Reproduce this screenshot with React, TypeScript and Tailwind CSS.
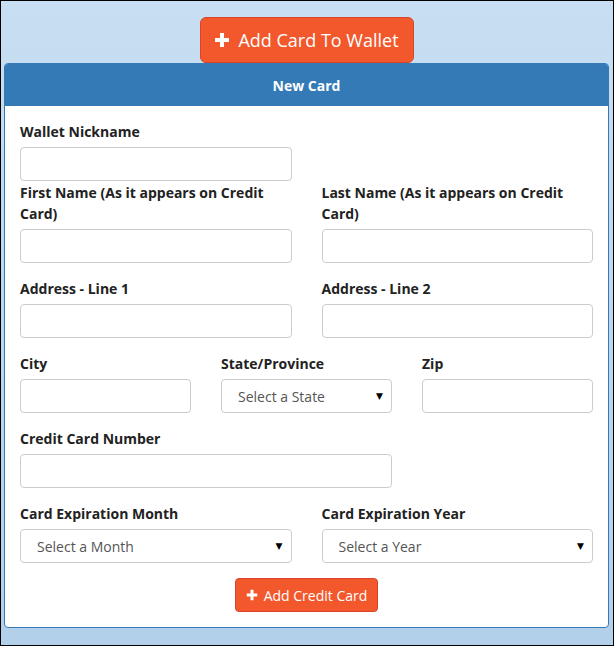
import React from 'react';

function PlusIcon({ size }: { size: number }) {
    return (
        <svg width={size} height={size} viewBox="0 0 16 16" className="shrink-0">
            <path d="M6 1h4v5h5v4h-5v5H6v-5H1V6h5z" fill="white" />
        </svg>
    );
}

function Field({ label, select, className = '' }: { label: string; select?: string; className?: string }) {
    return (
        <div className={`flex flex-col ${className}`}>
            <label className="mb-[5px] text-[14px] font-bold leading-[21px] text-[#222]">{label}</label>
            {select ? (
                <div className="flex h-[34px] items-center justify-between rounded-[4px] border border-[#ccc] bg-white pl-[16px] pr-[8px] text-[14px] text-[#555]">
                    <span>{select}</span>
                    <span className="text-[9px] text-black">▼</span>
                </div>
            ) : (
                <div className="h-[34px] rounded-[4px] border border-[#ccc] bg-white" />
            )}
        </div>
    );
}

export default function App() {
    return (
        <div
            className="flex h-[646px] w-[614px] flex-col items-center border border-black bg-gradient-to-b from-[#c8def2] to-[#b3d0eb] pt-[16px] pr-[4px] pl-[3px]"
            style={{ fontFamily: '"Open Sans", "DejaVu Sans", sans-serif' }}
        >
            <button className="flex h-[46px] w-[214px] items-center justify-center gap-[8px] rounded-[6px] border border-[#d9442a] bg-[#f2582c] text-[18px] text-white">
                <PlusIcon size={16} />
                Add Card To Wallet
            </button>
            <div className="w-full overflow-hidden rounded-[4px] border border-[#337ab7] bg-white">
                <div className="flex h-[42px] items-center justify-center bg-[#337ab7] text-[14px] font-bold text-white">New Card</div>
                <div className="flex flex-col px-[15px] pt-[15px] pb-[15px]">
                    <div className="grid grid-cols-2 gap-x-[30px]">
                        <Field label="Wallet Nickname" />
                    </div>
                    <div className="mt-[1px] grid grid-cols-2 gap-x-[30px]">
                        <Field label="First Name (As it appears on Credit Card)" />
                        <Field label="Last Name (As it appears on Credit Card)" />
                    </div>
                    <div className="mt-[15px] grid grid-cols-2 gap-x-[30px]">
                        <Field label="Address - Line 1" />
                        <Field label="Address - Line 2" />
                    </div>
                    <div className="mt-[15px] grid grid-cols-3 gap-x-[30px]">
                        <Field label="City" />
                        <Field label="State/Province" select="Select a State" />
                        <Field label="Zip" />
                    </div>
                    <div className="mt-[15px] grid grid-cols-3 gap-x-[30px]">
                        <Field label="Credit Card Number" className="col-span-2" />
                    </div>
                    <div className="mt-[15px] grid grid-cols-2 gap-x-[30px]">
                        <Field label="Card Expiration Month" select="Select a Month" />
                        <Field label="Card Expiration Year" select="Select a Year" />
                    </div>
                    <div className="mt-[15px] flex justify-center">
                        <button className="flex h-[34px] w-[143px] items-center justify-center gap-[6px] rounded-[4px] border border-[#d9442a] bg-[#f2582c] text-[14px] text-white">
                            <PlusIcon size={12} />
                            Add Credit Card
                        </button>
                    </div>
                </div>
            </div>
        </div>
    );
}
